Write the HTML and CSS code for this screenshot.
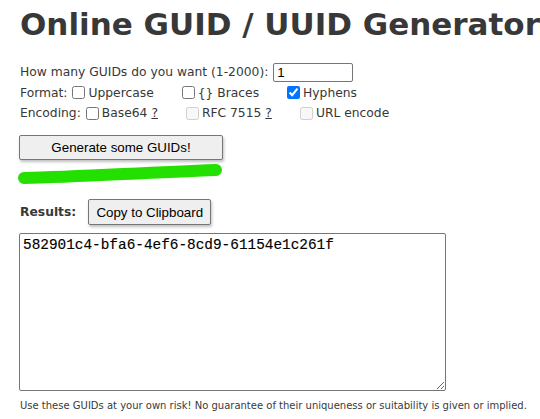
FILE: index.html
```html
<!DOCTYPE html>
<html>
<head>
<meta charset="utf-8">
<link rel="stylesheet" href="styles.css">
</head>
<body>
<h1 class="title">Online GUID / UUID Generator</h1>
<div class="form">
  <div class="row">
    <span>How many GUIDs do you want (1-2000):</span>
    <input class="count" type="text" value="1">
  </div>
  <div class="row">
    <span class="lbl">Format:</span>
    <label class="opt"><input type="checkbox">Uppercase</label>
    <label class="opt"><input type="checkbox">{} Braces</label>
    <label class="opt"><input type="checkbox" checked>Hyphens</label>
  </div>
  <div class="row">
    <span class="lbl">Encoding:</span>
    <label class="opt"><input type="checkbox">Base64 <u>?</u></label>
    <label class="opt dis"><input type="checkbox" disabled>RFC 7515 <u>?</u></label>
    <label class="opt dis"><input type="checkbox" disabled>URL encode</label>
  </div>
</div>
<button class="btn gen">Generate some GUIDs!</button>
<svg class="scribble" width="220" height="22" viewBox="0 0 220 22">
  <path d="M8 16 C 60 15, 120 11, 200 8" stroke="#24e000" stroke-width="12" stroke-linecap="round" fill="none"/>
</svg>
<div class="results">
  <b class="rlabel">Results:</b>
  <button class="btn copy">Copy to Clipboard</button>
</div>
<textarea class="out">582901c4-bfa6-4ef6-8cd9-61154e1c261f</textarea>
<p class="note">Use these GUIDs at your own risk! No guarantee of their uniqueness or suitability is given or implied.</p>
</body>
</html>
```
FILE: styles.css
```css
body {
  margin: 0;
  padding: 0 20px;
  font-family: "DejaVu Sans", Verdana, sans-serif;
  font-size: 12.3px;
  color: #383838;
  background: #fff;
}
.title {
  margin: 4px 0 0 0;
  font-size: 31px;
  font-weight: bold;
  color: #383838;
  line-height: 40px;
  white-space: nowrap;
}
.form {
  margin-top: 18px;
}
.row {
  display: flex;
  align-items: center;
  height: 20.5px;
}
.count {
  margin-left: 5px;
  width: 72px;
  height: 15px;
  padding: 1px 3px;
  border: 1px solid #767676;
  border-radius: 2px;
  font-family: "Liberation Sans", Arial, sans-serif;
  font-size: 13.33px;
}
.lbl {
  margin-right: 1px;
}
.opt {
  display: inline-flex;
  align-items: center;
  margin-right: 24px;
}
.opt input {
  margin: 3px 3px 3px 4px;
}
.opt u {
  margin-left: 4px;
}
.btn {
  font-family: "Liberation Sans", Arial, sans-serif;
  font-size: 13.33px;
  color: #000;
  background: #efefef;
  border: 1px solid #767676;
  border-radius: 2px;
  box-shadow: 1px 2px 3px rgba(0,0,0,0.25);
}
.gen {
  display: block;
  margin-top: 11.5px;
  margin-left: -1px;
  width: 204px;
  height: 25px;
}
.scribble {
  display: block;
  margin-left: -4px;
  margin-top: 2px;
}
.results {
  display: flex;
  align-items: center;
  margin-top: 15px;
}
.rlabel {
  font-weight: bold;
  margin-right: 12px;
}
.copy {
  height: 26px;
  width: 123px;
  padding: 0;
}
.out {
  display: block;
  margin-top: 8px;
  margin-left: -1px;
  width: 427px;
  height: 158px;
  box-sizing: border-box;
  padding: 3px 3px;
  border: 1px solid #767676;
  border-radius: 2px;
  font-family: "Liberation Mono", "Courier New", monospace;
  font-size: 14.4px;
  color: #000;
  -webkit-text-stroke: 0.15px #000;
}
.note {
  margin: 9px 0 0 0;
  font-size: 10px;
  color: #3a3a3a;
  white-space: nowrap;
}
```
